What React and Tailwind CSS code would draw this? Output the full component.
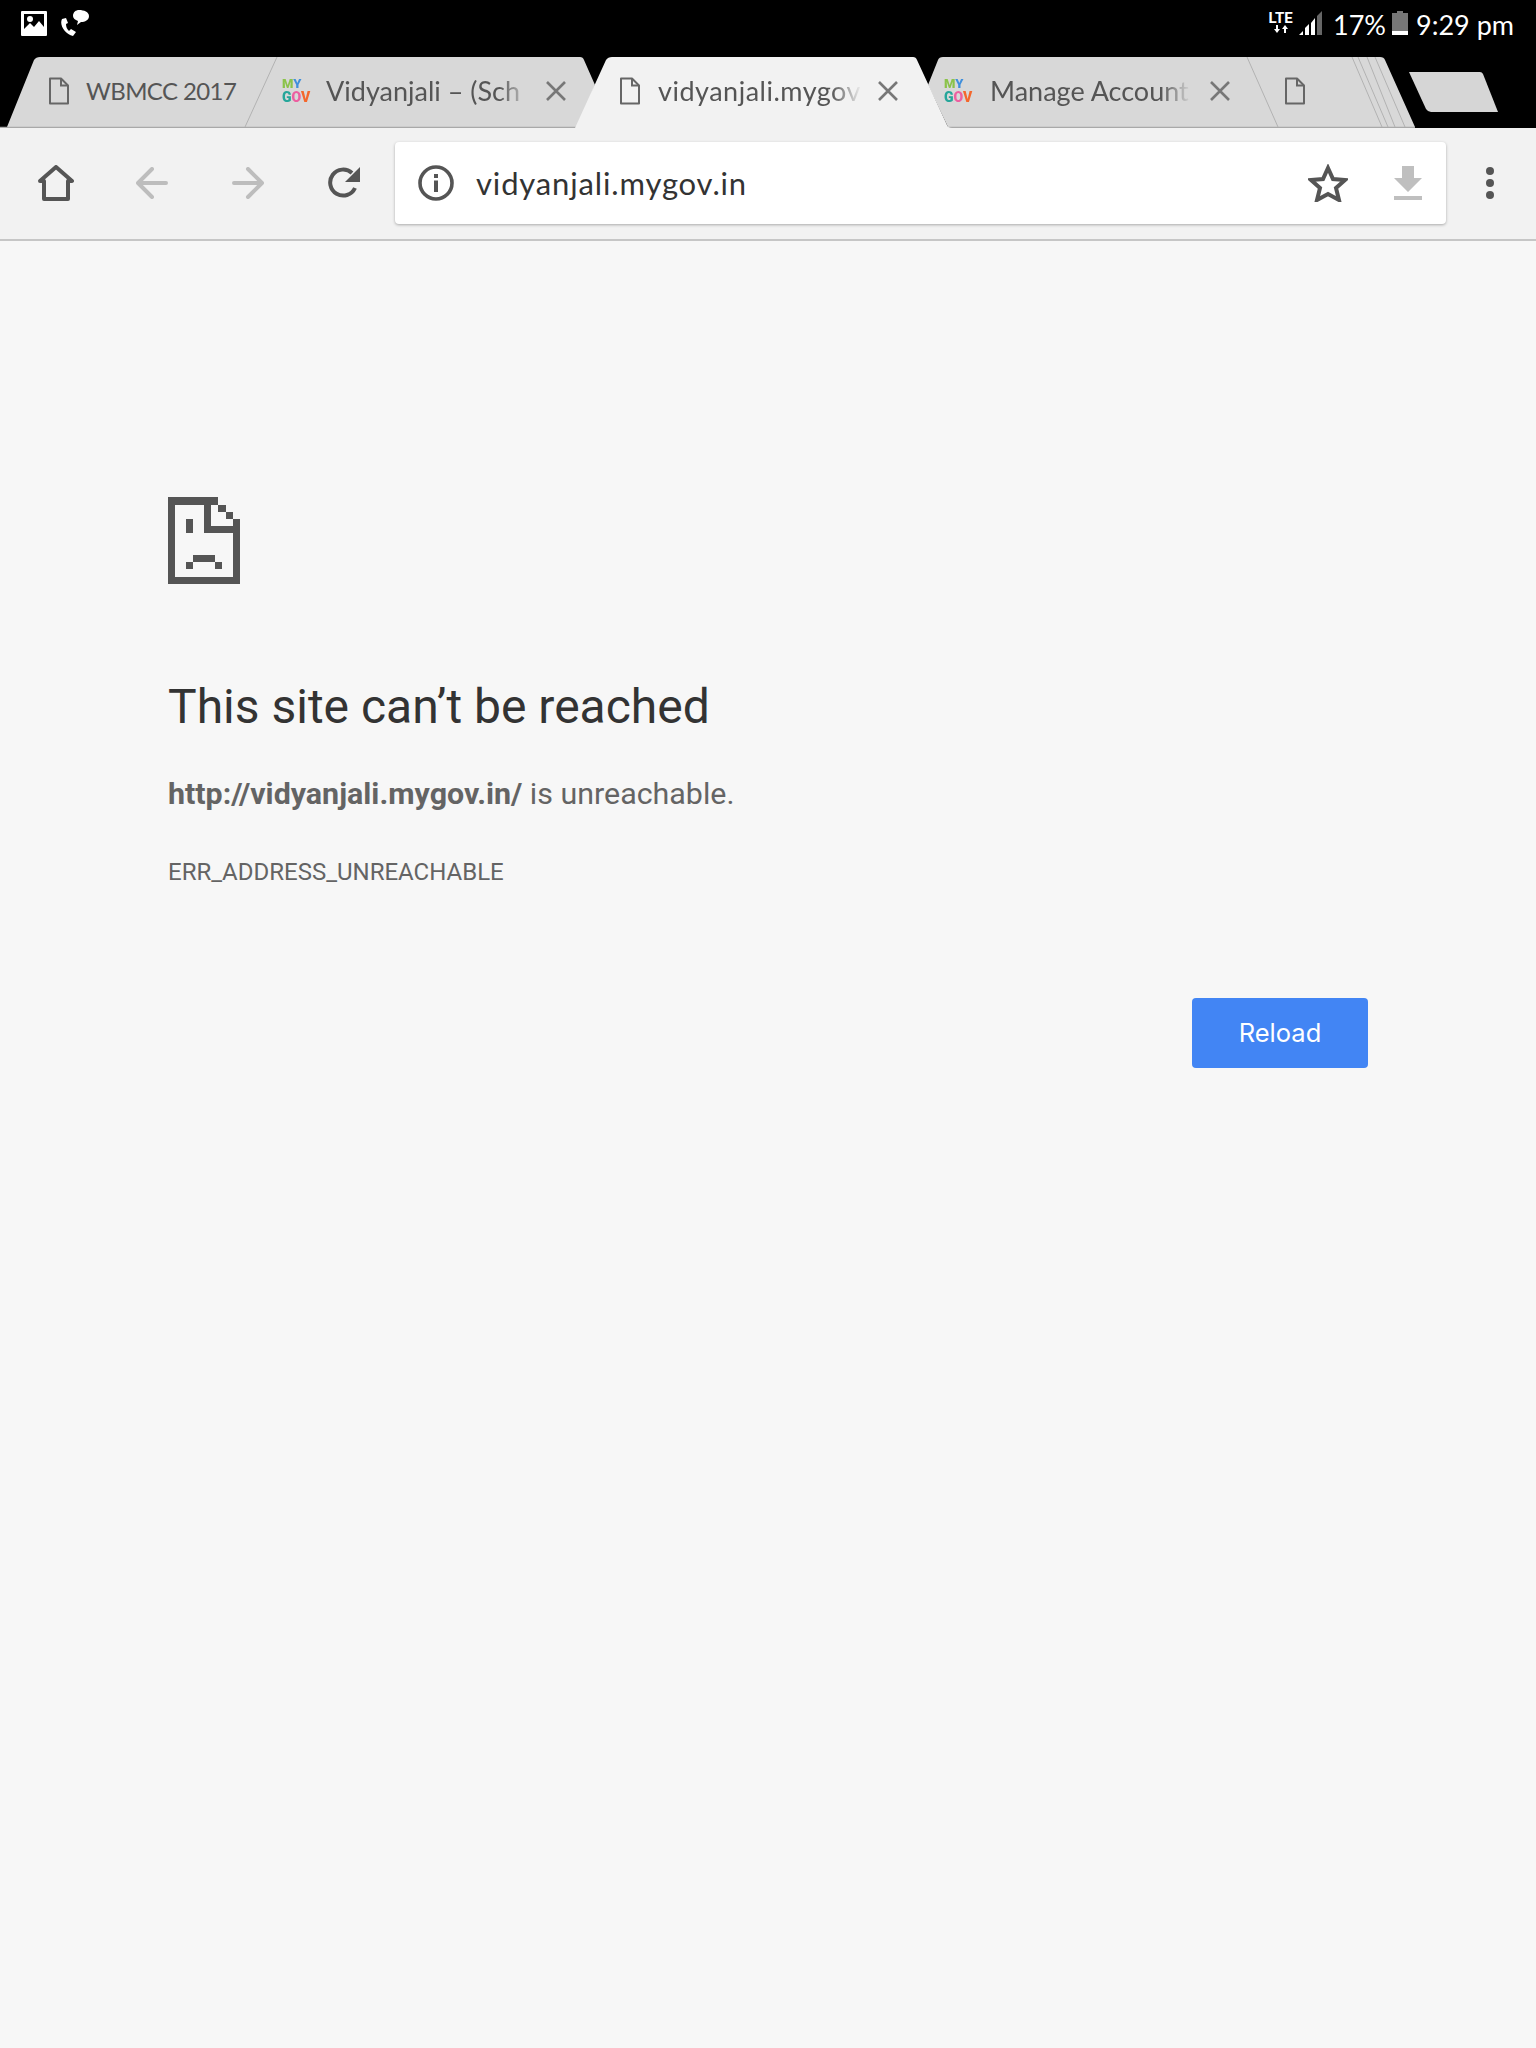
import React from 'react';

const TAB_FONT = "font-['Lato',sans-serif]";

function PageIcon() {
  return (
    <svg viewBox="0 0 22 28" className="h-[28px] w-[22px] shrink-0" fill="none" stroke="#666" strokeWidth="2">
      <path d="M2 1.5h11l7 7v18H2z" strokeLinejoin="round" />
      <path d="M13 1.5v7h7" />
    </svg>
  );
}

function MyGovIcon({ className = '' }) {
  return (
    <div className={`flex shrink-0 flex-col font-['Roboto',sans-serif] font-black blur-[0.4px] ${className}`}>
      <span className="text-[13px] leading-[12px]">
        <span className="text-[#8bc34a]">M</span>
        <span className="text-[#3f8fdc]">Y</span>
      </span>
      <span className="text-[14px] leading-[14px]">
        <span className="text-[#26a69a]">G</span>
        <span className="text-[#ec5fa0]">O</span>
        <span className="text-[#f4672c]">V</span>
      </span>
    </div>
  );
}

function CloseIcon({ className = '' }) {
  return (
    <svg viewBox="0 0 20 20" className={`h-[20px] w-[20px] shrink-0 ${className}`} stroke="#777" strokeWidth="2.6">
      <path d="M1 1l18 18M19 1L1 19" />
    </svg>
  );
}

function TabTitle({ children, className = '' }) {
  return (
    <div className={`whitespace-nowrap text-[27px] leading-[36px] text-[#555] ${TAB_FONT} [mask-image:linear-gradient(to_right,black_85%,transparent)] ${className}`}>
      {children}
    </div>
  );
}

function TabShapes() {
  return (
    <svg viewBox="0 0 1536 71" className="absolute inset-0 h-[71px] w-[1536px]">
      <path d="M7 70L34 3Q36 0 40 0H580Q583 0 584 3L595 28L578 70Z" fill="#d8d8d8" />
      <path d="M928 28L938 3Q939 0 943 0H1380Q1384 0 1385 3L1415 70H948Z" fill="#d8d8d8" />
      <path d="M0 70.5H580M948 70.5H1415" stroke="#a9a9a9" strokeWidth="1.5" />
      <path d="M277 0L245 70M1247 0L1278 70M1352 0L1382 70M1358 0L1388 70M1367 0L1395 70M1375 0L1405 70" stroke="#b2b2b2" strokeWidth="1" fill="none" />
      <path d="M575 71L606 3Q608 0 612 0H913Q916 0 917 3L947 68Q948 71 952 71Z" fill="#f2f2f2" />
      <path d="M1409 15H1480Q1482 15 1483 17L1498 55H1431Q1428 55 1426 52Z" fill="#d6d6d6" />
    </svg>
  );
}

function StatusBar() {
  return (
    <div className="flex h-[57px] items-start justify-between bg-black pl-[21px] pr-[22px] text-white">
      <div className="flex items-center gap-[13px] pt-[10px]">
        <svg viewBox="0 0 26 25" className="h-[25px] w-[26px]">
          <path fillRule="evenodd" d="M1 0h24a1 1 0 0 1 1 1v23a1 1 0 0 1-1 1H1a1 1 0 0 1-1-1V1a1 1 0 0 1 1-1zm2 3v15l6-6 4 4 5-6 5 6V3z" fill="#fff" />
          <circle cx="9" cy="8" r="3" fill="#fff" />
        </svg>
        <svg viewBox="0 0 29 26" className="h-[26px] w-[29px]">
          <path d="M2 9c-3 6 3 15 11 17l3-4-5-3-2 2c-2-2-3-4-3-7l2-1-2-5z" fill="#fff" />
          <path d="M19 0c5 0 10 2 10 6s-4 6-8 6l-4 3 1-4c-3-1-5-3-5-5 0-4 3-6 6-6z" fill="#fff" />
        </svg>
      </div>
      <div className="flex items-start pt-[10px]">
        <div className="flex w-[25px] flex-col items-center pt-[2px] font-['Roboto',sans-serif] text-[15px] font-bold leading-[13px]">
          <span>LTE</span>
          <svg viewBox="0 0 16 8" className="h-[8px] w-[16px]" fill="#fff">
            <path d="M3 0h2v4h2L4 8 1 4h2zM11 8h2V4h2l-3-4-3 4h2z" />
          </svg>
        </div>
        <svg viewBox="0 0 24 24" className="ml-[6px] mt-[1px] h-[24px] w-[24px]">
          <path d="M0 24l4-4v4zM6 24v-7l4-4v11zM12 24V12l4-5v17z" fill="#fff" />
          <path d="M18 24V5l5-5v24z" fill="#666" />
        </svg>
        <span className={`ml-[10px] text-[27px] leading-[30px] ${TAB_FONT}`}>17%</span>
        <svg viewBox="0 0 16 24" className="ml-[6px] mt-[1px] h-[24px] w-[16px]">
          <path d="M5 0h6v2h5v22H0V2h5z" fill="#777" />
          <path d="M0 20h16v4H0z" fill="#fff" />
        </svg>
        <span className={`ml-[8px] text-[27px] leading-[30px] ${TAB_FONT}`}>9:29 pm</span>
      </div>
    </div>
  );
}

function TabStrip() {
  return (
    <div className="relative h-[71px] bg-black">
      <TabShapes />
      <div className="relative flex h-[55px] items-center pl-[48px] pt-[13px]">
        <div className="flex w-[234px] items-center">
          <PageIcon />
          <div className={`ml-[16px] whitespace-nowrap text-[24px] leading-[36px] tracking-[-0.6px] text-[#555] ${TAB_FONT}`}>WBMCC 2017</div>
        </div>
        <div className="flex w-[337px] items-center">
          <MyGovIcon className="w-[32px]" />
          <TabTitle className="ml-[12px] w-[204px]">Vidyanjali – (Sch</TabTitle>
          <CloseIcon className="ml-[16px]" />
        </div>
        <div className="flex w-[325px] items-center">
          <PageIcon />
          <TabTitle className="ml-[17px] w-[204px] tracking-[0.5px]">vidyanjali.mygov</TabTitle>
          <CloseIcon className="ml-[16px]" />
        </div>
        <div className="flex w-[340px] items-center">
          <MyGovIcon className="w-[36px]" />
          <TabTitle className="ml-[10px] w-[201px]">Manage Account</TabTitle>
          <CloseIcon className="ml-[19px]" />
        </div>
        <PageIcon />
      </div>
    </div>
  );
}

function Toolbar() {
  return (
    <div className="flex h-[113px] items-center border-b-2 border-[#c6c6c6] bg-[#f2f2f2] pb-[1px]">
      <svg viewBox="0 0 36 36" className="ml-[38px] h-[36px] w-[36px]" fill="none" stroke="#555" strokeWidth="4" strokeLinejoin="round">
        <path d="M2 16L18 2l16 14h-4v18H6V16z" />
      </svg>
      <svg viewBox="0 0 32 32" className="ml-[62px] h-[32px] w-[32px]" fill="none" stroke="#bdbdbd" strokeWidth="4" strokeLinecap="round" strokeLinejoin="round">
        <path d="M30 16H3M16 2L2 16l14 14" />
      </svg>
      <svg viewBox="0 0 32 32" className="ml-[64px] h-[32px] w-[32px]" fill="none" stroke="#bdbdbd" strokeWidth="4" strokeLinecap="round" strokeLinejoin="round">
        <path d="M2 16h27M16 2l14 14-14 14" />
      </svg>
      <svg viewBox="0 0 32 32" className="ml-[64px] h-[32px] w-[32px]">
        <path d="M27 21A13 13 0 1 1 24 6" fill="none" stroke="#555" strokeWidth="4" />
        <path d="M32 0v15H17z" fill="#555" />
      </svg>
      <div className="ml-[35px] flex h-[82px] w-[1051px] items-center rounded-[4px] bg-white shadow-[0_1px_3px_rgba(0,0,0,0.3)]">
        <svg viewBox="0 0 36 36" className="ml-[23px] h-[36px] w-[36px]">
          <circle cx="18" cy="18" r="16" fill="none" stroke="#555" strokeWidth="3.6" />
          <path d="M16 15.5h4V27h-4zM16 9h4v4h-4z" fill="#555" />
        </svg>
        <div className={`ml-[22px] text-[31px] leading-[40px] tracking-[0.85px] text-[#333] ${TAB_FONT}`}>vidyanjali.mygov.in</div>
        <svg viewBox="0 0 40 38" className="ml-auto h-[38px] w-[40px]" fill="none" stroke="#555" strokeWidth="4">
          <path d="M20 4l5 11 12 1-9 8 3 12-11-6-11 6 3-12-9-8 12-1z" />
        </svg>
        <svg viewBox="0 0 28 34" className="ml-[46px] mr-[24px] h-[34px] w-[28px]" fill="#bfbfbf">
          <path d="M8 0h12v12h8L14 26 0 12h8zM0 30h28v4H0z" />
        </svg>
      </div>
      <div className="ml-[40px] flex flex-col gap-[4px]">
        <span className="block h-[8px] w-[8px] rounded-full bg-[#555]" />
        <span className="block h-[8px] w-[8px] rounded-full bg-[#555]" />
        <span className="block h-[8px] w-[8px] rounded-full bg-[#555]" />
      </div>
    </div>
  );
}

// 10 x 12 pixel grid of the sad page, half steps come from the original icon
const SAD_PAGE = [
  [0, 0, 7, 1], [0, 1, 1, 10], [0, 11, 10, 1], [9, 3, 1, 8],
  [7, 1, 1, 1], [8, 2, 1, 1], [5, 1, 1, 4], [6, 4, 3, 1],
  [2.5, 3, 1, 2], [3.5, 8, 3, 1], [2.5, 9, 1, 1], [6.5, 9, 1, 1],
];

function SadPage() {
  return (
    <svg viewBox="0 0 10 12" className="h-[87px] w-[72px]" fill="#555" shapeRendering="crispEdges">
      {SAD_PAGE.map(([x, y, w, h], i) => (
        <rect key={i} x={x} y={y} width={w} height={h} />
      ))}
    </svg>
  );
}

export default function App() {
  return (
    <div className="min-h-[2048px] w-[1536px] overflow-hidden bg-[#f7f7f7] font-['Roboto',sans-serif]">
      <StatusBar />
      <TabStrip />
      <Toolbar />
      <main className="px-[168px] pt-[256px]">
        <SadPage />
        <h1 className="mt-[95px] text-[48px] leading-[56px] text-[#333]">This site can’t be reached</h1>
        <p className="mt-[39px] text-[30.4px] leading-[40px] text-[#646464]">
          <strong className="font-bold">http://vidyanjali.mygov.in/</strong> is unreachable.
        </p>
        <div className="mt-[42px] text-[24px] leading-[32px] text-[#646464]">ERR_ADDRESS_UNREACHABLE</div>
        <div className="mt-[110px] flex justify-end">
          <button className="h-[70px] w-[176px] rounded-[4px] bg-[#4285f4] font-['Inter',sans-serif] text-[25.5px] text-white">Reload</button>
        </div>
      </main>
    </div>
  );
}
